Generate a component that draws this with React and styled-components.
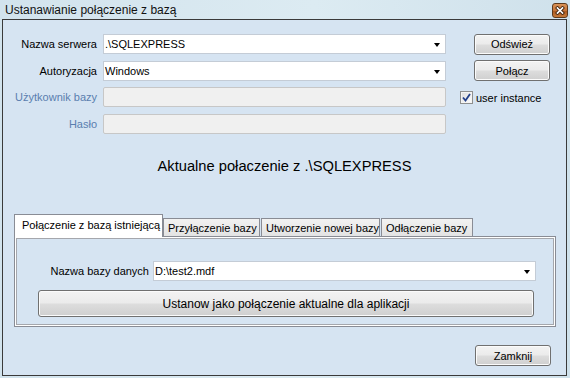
import React from 'react';
import styled, { createGlobalStyle } from 'styled-components';

const GlobalStyle = createGlobalStyle`
  html, body {
    margin: 0;
    padding: 0;
  }
  body {
    width: 570px;
    height: 378px;
    overflow: hidden;
    font-family: "Liberation Sans", Arial, sans-serif;
    font-size: 11px;
    color: #000;
  }
  * {
    box-sizing: border-box;
  }
`;

const Window = styled.div`
  width: 570px;
  height: 378px;
  display: flex;
  flex-direction: column;
  background: linear-gradient(to right, #d2e3ed 0%, #dcebf2 55%, #cfe1eb 100%);
`;

const TitleBar = styled.div`
  height: 19px;
  display: flex;
  align-items: center;
  justify-content: space-between;
  padding: 0 2px 0 5px;
`;

const Title = styled.span`
  font-size: 12px;
  color: #111;
  padding-top: 1px;
`;

const CloseButton = styled.div`
  width: 16px;
  height: 15px;
  margin-top: 1px;
  border: 1px solid #5e3a1c;
  border-radius: 3px;
  background: linear-gradient(#d99256 0%, #c4743a 50%, #a9581f 52%, #c77a3a 100%);
  display: flex;
  align-items: center;
  justify-content: center;
`;

const Client = styled.div`
  flex: 1;
  margin: 0 3px 2px 2px;
  border: 1px solid #3a3a3a;
  background: #d6e4f2;
  display: flex;
  flex-direction: column;
`;

const Form = styled.div`
  display: grid;
  grid-template-columns: 84px 343px 1fr;
  grid-auto-rows: 20px;
  column-gap: 6px;
  row-gap: 6.5px;
  padding: 14px 0 0 10px;
`;

const Label = styled.label`
  display: flex;
  align-items: center;
  justify-content: flex-end;
  white-space: nowrap;
  color: ${(p) => (p.$disabled ? '#5a7eaf' : '#000')};
`;

const Combo = styled.div`
  position: relative;
  height: 20px;
  background: #fff;
  border: 1px solid #c4ccd6;
  display: flex;
  align-items: center;
  padding-left: 1px;
  white-space: nowrap;
`;

const Arrow = styled.span`
  position: absolute;
  right: 5px;
  top: 8px;
  width: 0;
  height: 0;
  border-left: 3.5px solid transparent;
  border-right: 3.5px solid transparent;
  border-top: 4px solid #000;
`;

const TextBox = styled.div`
  height: 20px;
  background: #f0f0f0;
  border: 1px solid #c7c7c7;
  border-radius: 2px;
`;

const Side = styled.div`
  display: flex;
  align-items: center;
  padding-left: ${(p) => p.$indent || 0}px;
`;

const Button = styled.button`
  width: ${(p) => p.$width || 76}px;
  height: ${(p) => p.$height || 21}px;
  padding: 0;
  border: 1px solid #707070;
  border-radius: 3px;
  background: linear-gradient(#f3f3f3 0%, #ebebeb 48%, #dddddd 52%, #cfcfcf 100%);
  box-shadow: inset 0 0 0 1px #fbfbfb;
  font-family: "Liberation Sans", Arial, sans-serif;
  font-size: ${(p) => p.$size || 11}px;
  color: #000;
`;

const CheckRow = styled.div`
  display: flex;
  align-items: center;
  gap: 3px;
  padding-top: 1px;
`;

const CheckBox = styled.span`
  width: 13px;
  height: 13px;
  border: 1px solid #8e8f8f;
  background: linear-gradient(135deg, #dcdcdc 0%, #fdfdfd 100%);
  box-shadow: inset 0 0 0 1px #f4f4f4;
  display: flex;
  align-items: center;
  justify-content: center;
`;

const Status = styled.div`
  margin-top: 24px;
  height: 17px;
  line-height: 17px;
  text-align: center;
  font-size: 14.7px;
  color: #000;
`;

const Tabs = styled.div`
  margin: 39.5px 0 0 11px;
  width: 542px;
`;

const TabStrip = styled.div`
  height: 23px;
  display: flex;
  align-items: flex-end;
  gap: 1px;
  margin-bottom: -1px;
  position: relative;
  z-index: 1;
`;

const Tab = styled.div`
  width: ${(p) => p.$width}px;
  height: ${(p) => (p.$active ? 23 : 19)}px;
  margin-left: ${(p) => p.$shift || 0}px;
  border: 1px solid #898c95;
  border-bottom: ${(p) => (p.$active ? 'none' : '1px solid #898c95')};
  background: ${(p) => (p.$active ? '#fff' : 'linear-gradient(#f2f2f2, #e3e3e3)')};
  display: flex;
  align-items: center;
  padding: ${(p) => (p.$active ? '0 0 2px 7px' : '0 0 0 4px')};
  white-space: nowrap;
`;

const Page = styled.div`
  border: 1px solid #898c95;
  background: #fff;
  padding: 1px;
`;

const PageInner = styled.div`
  border: 1px solid #a5a7ad;
  background: #d6e4f2;
  padding: 22px 18px 7px 21px;
  display: flex;
  flex-direction: column;
  gap: 9px;
`;

const DbRow = styled.div`
  display: flex;
  align-items: center;
  gap: 4px;
`;

const DbLabel = styled.span`
  width: 111px;
  text-align: right;
  white-space: nowrap;
`;

const DbCombo = styled(Combo)`
  flex: 1;
  margin-right: -1px;
`;

const Footer = styled.div`
  margin-top: 18px;
  display: flex;
  justify-content: flex-end;
  padding-right: 15px;
`;

const CloseGlyph = () => (
  <svg width="10" height="9" viewBox="0 0 10 9">
    <path d="M2.5 2 L7.5 7 M7.5 2 L2.5 7" stroke="#3f220c" strokeWidth="3.4" strokeLinecap="square" />
    <path d="M2.5 2 L7.5 7 M7.5 2 L2.5 7" stroke="#fff" strokeWidth="1.7" strokeLinecap="square" />
  </svg>
);

const CheckMark = () => (
  <svg width="9" height="9" viewBox="0 0 9 9">
    <path d="M1 4.5 L3.5 7.5 L8 1" fill="none" stroke="#23408a" strokeWidth="1.8" />
  </svg>
);

const App = () => {
  return (
    <Window>
      <GlobalStyle />
      <TitleBar>
        <Title>Ustanawianie połączenie z bazą</Title>
        <CloseButton>
          <CloseGlyph />
        </CloseButton>
      </TitleBar>
      <Client>
        <Form>
          <Label>Nazwa serwera</Label>
          <Combo>
            .\SQLEXPRESS
            <Arrow />
          </Combo>
          <Side $indent={22}>
            <Button>Odśwież</Button>
          </Side>

          <Label>Autoryzacja</Label>
          <Combo>
            Windows
            <Arrow />
          </Combo>
          <Side $indent={22}>
            <Button>Połącz</Button>
          </Side>

          <Label $disabled>Użytkownik bazy</Label>
          <TextBox />
          <Side $indent={8}>
            <CheckRow>
              <CheckBox>
                <CheckMark />
              </CheckBox>
              user instance
            </CheckRow>
          </Side>

          <Label $disabled>Hasło</Label>
          <TextBox />
          <Side />
        </Form>

        <Status>Aktualne połaczenie z .\SQLEXPRESS</Status>

        <Tabs>
          <TabStrip>
            <Tab $active $width={149}>Połączenie z bazą istniejącą</Tab>
            <Tab $width={97} $shift={-1}>Przyłączenie bazy</Tab>
            <Tab $width={119}>Utworzenie nowej bazy</Tab>
            <Tab $width={92}>Odłączenie bazy</Tab>
          </TabStrip>
          <Page>
            <PageInner>
              <DbRow>
                <DbLabel>Nazwa bazy danych</DbLabel>
                <DbCombo>
                  D:\test2.mdf
                  <Arrow />
                </DbCombo>
              </DbRow>
              <Button $width={496} $height={27} $size={12}>
                Ustanow jako połączenie aktualne dla aplikacji
              </Button>
            </PageInner>
          </Page>
        </Tabs>

        <Footer>
          <Button>Zamknij</Button>
        </Footer>
      </Client>
    </Window>
  );
};

export default App;
